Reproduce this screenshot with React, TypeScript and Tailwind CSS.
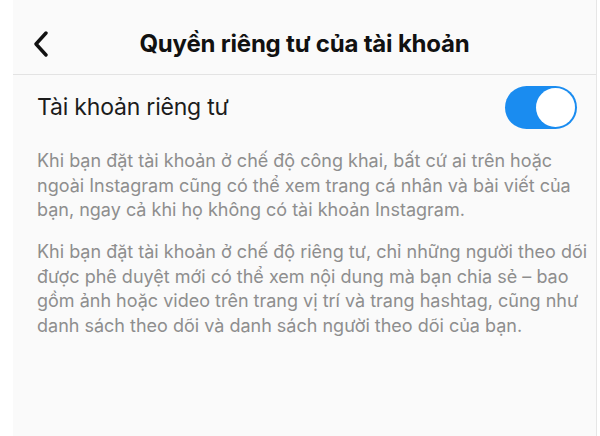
import React, { useState } from "react";

function Toggle({ on, onChange }: { on: boolean; onChange: () => void }) {
  return (
    <button
      onClick={onChange}
      className={`relative h-[43px] w-[72px] rounded-full ${on ? "bg-[#1a8cf0]" : "bg-[#dbdbdb]"}`}
    >
      <span
        className={`absolute top-[2px] h-[39px] w-[39px] rounded-full bg-white ${on ? "right-[2px]" : "left-[2px]"}`}
      />
    </button>
  );
}

export default function App() {
  const [isPrivate, setIsPrivate] = useState(true);

  return (
    <div className="flex h-[436px] w-[600px] bg-white font-['Inter',sans-serif]">
      <div className="ml-[13px] mr-[3px] flex flex-1 flex-col border-r border-[#e6e6e6] bg-[#fafafa]">
        <div className="relative flex h-[75px] items-center justify-center border-b border-[#e3e3e3]">
          <button className="absolute left-[18px] top-[31px]">
            <svg width="20" height="26" viewBox="0 0 20 26" fill="none">
              <path d="M15 2 L5 13 L15 24" stroke="#111" strokeWidth="3.4" strokeLinecap="round" strokeLinejoin="round" />
            </svg>
          </button>
          <h1 className="pt-[14px] text-[24px] font-bold tracking-[-0.2px] text-[#111]">Quyền riêng tư của tài khoản</h1>
        </div>

        <div className="flex items-center justify-between pl-[24px] pr-[19px] pt-[11px]">
          <span className="text-[23px] tracking-[-0.2px] text-[#1c1c1c]">Tài khoản riêng tư</span>
          <Toggle on={isPrivate} onChange={() => setIsPrivate(!isPrivate)} />
        </div>

        <div className="flex flex-col gap-[17.5px] whitespace-nowrap pl-[24px] pt-[20px] text-[18px] leading-[24.5px] text-[#8e8e8e]">
          <p>
            Khi bạn đặt tài khoản ở chế độ công khai, bất cứ ai trên hoặc
            <br />
            ngoài Instagram cũng có thể xem trang cá nhân và bài viết của
            <br />
            bạn, ngay cả khi họ không có tài khoản Instagram.
          </p>
          <p>
            Khi bạn đặt tài khoản ở chế độ riêng tư, chỉ những người theo dõi
            <br />
            được phê duyệt mới có thể xem nội dung mà bạn chia sẻ – bao
            <br />
            gồm ảnh hoặc video trên trang vị trí và trang hashtag, cũng như
            <br />
            danh sách theo dõi và danh sách người theo dõi của bạn.
          </p>
        </div>
      </div>
    </div>
  );
}
